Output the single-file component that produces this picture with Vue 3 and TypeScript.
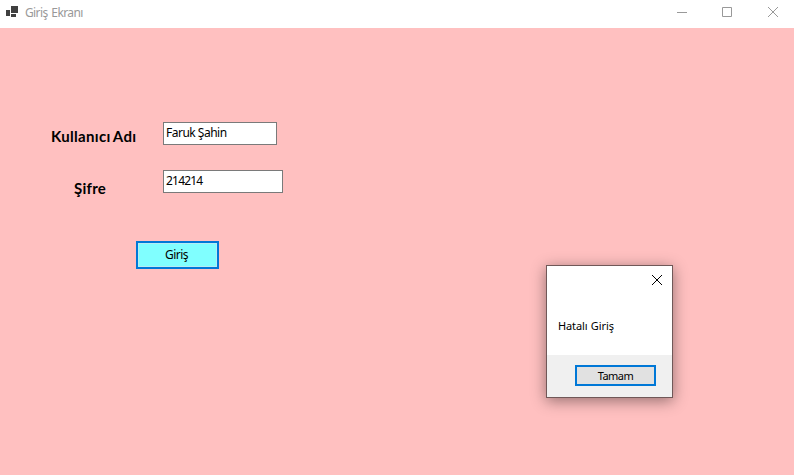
<script setup lang="ts">
import { ref } from 'vue'

const username = ref('Faruk Şahin')
const password = ref('214214')
const dialogOpen = ref(true)
</script>

<template>
  <main class="window">
    <header class="titlebar">
      <svg class="app-icon" width="13" height="12" viewBox="0 0 13 12" shape-rendering="crispEdges">
        <path d="M5 0h7v7H5zM0 4h4v6H0zM5 8h5v3H5z" fill="#404040" />
      </svg>
      <span class="title">Giriş Ekranı</span>
      <nav class="controls">
        <svg width="10" height="10" viewBox="0 0 10 10"><path d="M0 5.5h10" /></svg>
        <svg width="10" height="10" viewBox="0 0 10 10"><path d="M.5.5h9v9h-9z" /></svg>
        <svg class="close" width="10" height="10" viewBox="0 0 10 10"><path d="M0 0l10 10M10 0L0 10" /></svg>
      </nav>
    </header>
    <form class="form" @submit.prevent="dialogOpen = true">
      <div class="row">
        <label class="label user-label" for="user"><span>Kullanıcı Adı</span></label>
        <input id="user" v-model="username" class="field user-field" spellcheck="false" />
      </div>
      <div class="row second">
        <label class="label pass-label" for="pass"><span>Şifre</span></label>
        <input id="pass" v-model="password" class="field pass-field" spellcheck="false" />
      </div>
      <button class="login" type="submit">Giriş</button>
    </form>
    <section v-if="dialogOpen" class="dialog" role="dialog">
      <div class="dialog-body">
        <svg class="dialog-close" width="10" height="10" viewBox="0 0 10 10" @click="dialogOpen = false">
          <path d="M0 0l10 10M10 0L0 10" />
        </svg>
        <p class="message">Hatalı Giriş</p>
      </div>
      <footer class="dialog-footer">
        <button class="ok" type="button" @click="dialogOpen = false">Tamam</button>
      </footer>
    </section>
  </main>
</template>

<style>
body {
  margin: 0;
  overflow: hidden;
}
</style>

<style scoped>
* {
  box-sizing: border-box;
}
.window {
  position: relative;
  width: 794px;
  height: 475px;
  background: #ffc0c0;
  color: #000;
  font-family: "Noto Sans", "Open Sans", sans-serif;
  font-size: 12px;
}
.titlebar {
  display: flex;
  height: 28px;
  padding-left: 6px;
  background: #fff;
}
.app-icon {
  margin-top: 6px;
}
.title {
  margin-left: 6px;
  color: #999;
  font-size: 12px;
  line-height: 26px;
  letter-spacing: -0.62px;
  word-spacing: 1.3px;
  white-space: nowrap;
}
.controls {
  display: flex;
  gap: 35px;
  margin: 7px 16px 0 auto;
}
.controls svg {
  display: block;
  overflow: visible;
  fill: none;
  stroke: #999;
}
.controls .close {
  margin-left: 1px;
}
.form {
  padding-top: 94px;
}
.row {
  display: flex;
  height: 23px;
}
.second {
  margin-top: 25px;
}
.label {
  width: 163px;
  font-family: Lato, sans-serif;
  font-size: 15px;
  font-weight: 700;
  line-height: 20px;
  white-space: nowrap;
}
.user-label {
  padding: 4px 0 0 51px;
  letter-spacing: 0.32px;
  word-spacing: -1.3px;
}
.pass-label {
  padding: 8px 0 0 74px;
  letter-spacing: 0.25px;
}
.field {
  height: 23px;
  margin: 0;
  padding: 0 2px 2px;
  border: 1px solid #7a7a7a;
  border-radius: 0;
  outline: 0;
  background: #fff;
  color: #000;
  font: inherit;
  letter-spacing: -0.5px;
}
.user-field {
  width: 114px;
}
.pass-field {
  width: 120px;
  letter-spacing: -0.8px;
}
.login {
  display: block;
  width: 83px;
  height: 28px;
  margin: 48px 0 0 136px;
  padding: 0 2px 2px 0;
  border: 2px solid #0078d7;
  border-radius: 0;
  background: #80ffff;
  box-shadow: inset 0 0 0 1px #b5edf5;
  color: #000;
  font: inherit;
  letter-spacing: -0.48px;
}
.dialog {
  position: absolute;
  top: 265px;
  left: 546px;
  width: 127px;
  height: 133px;
  border: 1px solid #705858;
  background: #fff;
  box-shadow: 0 3px 14px rgb(0 0 0 / 42%);
}
.dialog-body {
  display: flex;
  flex-direction: column;
  height: 89px;
}
.dialog-close {
  align-self: flex-end;
  margin: 9px 10px 0 0;
  overflow: visible;
  fill: none;
  stroke: #000;
}
.message {
  margin: 32px 0 0 11px;
  font-size: 11px;
  line-height: 18px;
  letter-spacing: -0.1px;
  word-spacing: 0.5px;
  white-space: nowrap;
}
.dialog-footer {
  height: 42px;
  padding: 10px 0 0 28px;
  background: #f0f0f0;
}
.ok {
  display: block;
  width: 81px;
  height: 21px;
  margin: 0;
  padding: 0;
  border: 2px solid #0078d7;
  border-radius: 0;
  background: #e1e1e1;
  color: #000;
  font: inherit;
  font-size: 11px;
  line-height: 17px;
  letter-spacing: -0.5px;
}
</style>
